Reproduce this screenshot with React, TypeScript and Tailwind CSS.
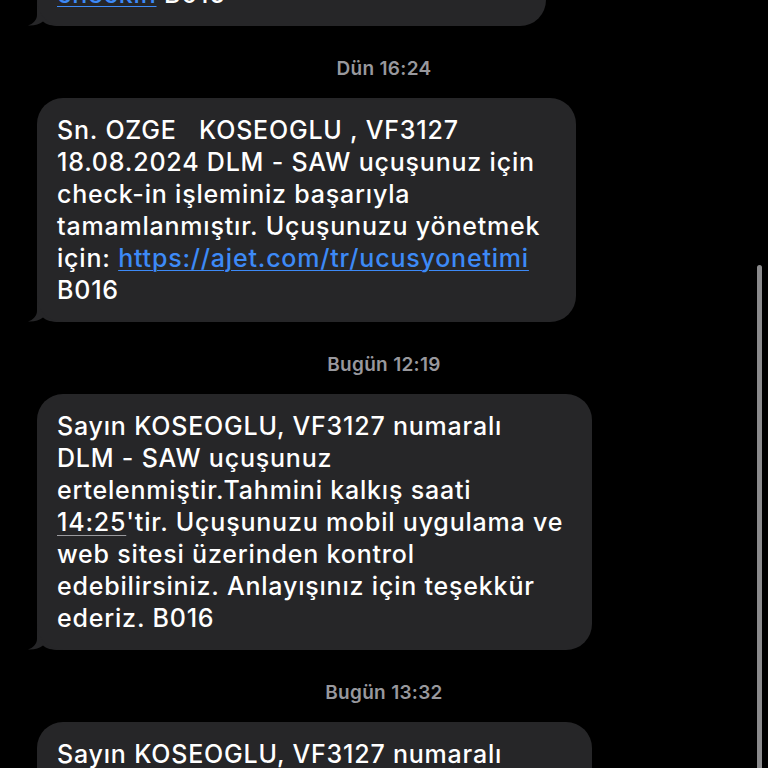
import type { ReactNode } from 'react';

const font = { fontFamily: 'Inter, "Noto Sans", "DejaVu Sans", sans-serif' };

function Tail() {
  return (
    <svg
      className="absolute -left-[9px] bottom-0"
      width="40"
      height="28"
      viewBox="0 0 40 28"
      fill="#262628"
    >
      <path d="M9 0 L9 17 C9 22 5 26 0 27.5 C6 28 11 26.5 15 23.5 C18 26.5 24 28 31 28 L40 28 L40 0 Z" />
    </svg>
  );
}

function Bubble({ width, children, className = '' }: { width: string; children: ReactNode; className?: string }) {
  return (
    <div className={`relative ${width} ${className}`}>
      <Tail />
      <div className="relative rounded-[26px] bg-[#262628] pl-5 py-4 text-[25px] leading-[32px] font-medium tracking-[0.8px] text-white whitespace-pre">
        {children}
      </div>
    </div>
  );
}

function Stamp({ day, time }: { day: string; time: string }) {
  return (
    <div className="pt-8 pb-[18px] text-center text-[19px] leading-[22px] font-semibold tracking-[0.3px] text-[#98989d] pr-[37px]">
      {day} {time}
    </div>
  );
}

function Link({ children }: { children: ReactNode }) {
  return <span className="text-[#3d8af7] underline underline-offset-[3px] decoration-1">{children}</span>;
}

export default function App() {
  return (
    <div className="relative h-[768px] w-[768px] overflow-hidden bg-black" style={font}>
      <div className="flex flex-col pl-[37px]">
        <Bubble width="w-[509px]" className="-mt-[38px]">
          <div>
            <Link>checkin</Link> B016
          </div>
        </Bubble>

        <Stamp day="Dün" time="16:24" />

        <Bubble width="w-[539px]">
          <div>Sn. OZGE   KOSEOGLU , VF3127</div>
          <div>18.08.2024 DLM - SAW uçuşunuz için</div>
          <div>check-in işleminiz başarıyla</div>
          <div>tamamlanmıştır. Uçuşunuzu yönetmek</div>
          <div>
            için: <Link>https://ajet.com/tr/ucusyonetimi</Link>
          </div>
          <div>B016</div>
        </Bubble>

        <Stamp day="Bugün" time="12:19" />

        <Bubble width="w-[555px]">
          <div>Sayın KOSEOGLU, VF3127 numaralı</div>
          <div>DLM - SAW uçuşunuz</div>
          <div>ertelenmiştir.Tahmini kalkış saati</div>
          <div>
            <span className="underline underline-offset-[4px] decoration-1 decoration-[#9a9a9e]">14:25</span>'tir. Uçuşunuzu mobil uygulama ve
          </div>
          <div>web sitesi üzerinden kontrol</div>
          <div>edebilirsiniz. Anlayışınız için teşekkür</div>
          <div>ederiz. B016</div>
        </Bubble>

        <Stamp day="Bugün" time="13:32" />

        <Bubble width="w-[555px]">
          <div>Sayın KOSEOGLU, VF3127 numaralı</div>
          <div>DLM - SAW uçuşunuz</div>
          <div>ertelenmiştir.Tahmini kalkış saati</div>
        </Bubble>
      </div>

      <div className="absolute right-[6px] top-[265px] h-[520px] w-[5px] rounded-full bg-[#8a8a8c]" />
    </div>
  );
}
